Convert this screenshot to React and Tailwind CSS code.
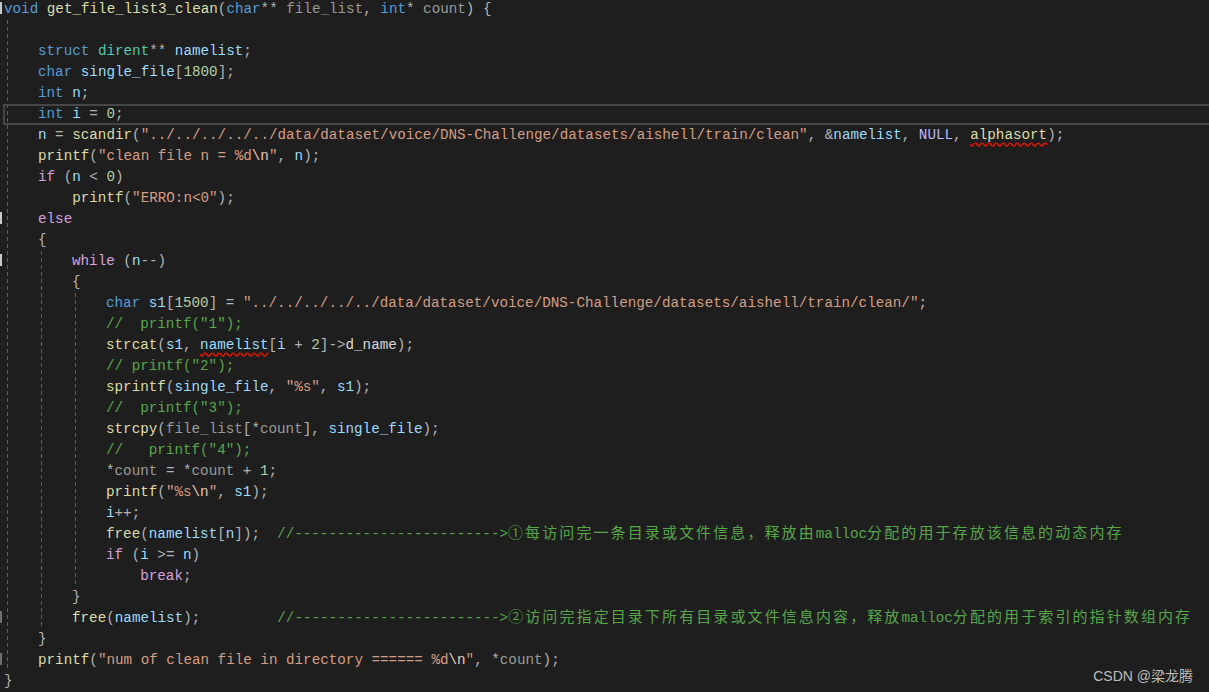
import React from 'react';

// colores del tema oscuro de Visual Studio
const C = {
  k: 'text-[#569cd6]',
  c: 'text-[#d8a0df]',
  f: 'text-[#dcdcaa]',
  v: 'text-[#9cdcfe]',
  p: 'text-[#9a9a9a]',
  s: 'text-[#d69d85]',
  e: 'text-[#e8c9bb]',
  m: 'text-[#57a64a]',
  n: 'text-[#b5cea8]',
  t: 'text-[#4ec9b0]',
  o: 'text-[#b4b4b4]',
  u: 'text-[#beb7ff]',
  d: 'text-[#dadada]',
  w: 'text-[#dcdcaa] underline decoration-wavy decoration-[#e51400] underline-offset-[3px]',
  x: 'text-[#9cdcfe] underline decoration-wavy decoration-[#e51400] underline-offset-[3px]',
  j: "text-[#57a64a] text-[15px] leading-none tracking-[2.1px] font-['Noto_Sans_CJK_SC',sans-serif]",
};

const guide =
  'ml-[3px] pl-[31px] bg-[linear-gradient(to_bottom,#5e5e5e_4px,transparent_4px)] bg-[length:1px_7px] bg-repeat-y bg-left-top';

const ARROW = '//' + '-'.repeat(24) + '>';

function Line({ t = [], hl = false }) {
  return (
    <div
      className={`whitespace-pre ${
        hl
          ? '-ml-[35px] pl-[33px] h-[21px] leading-[17px] border-2 border-r-0 border-[#464646]'
          : 'h-[21px] leading-[21px]'
      }`}
    >
      {t.map((tok, i) =>
        typeof tok === 'string' ? (
          <span key={i} className={C.o}>{tok}</span>
        ) : (
          <span key={i} className={C[tok[0]]}>{tok[1]}</span>
        )
      )}
    </div>
  );
}

function Mark({ top, tone }) {
  return <div className={`absolute left-0 w-[2px] h-[12px] ${tone}`} style={{ top }} />;
}

export default function App() {
  return (
    <div className="relative h-[692px] w-full overflow-hidden bg-[#1e1e1e] flex flex-col font-['Liberation_Mono',monospace] text-[14.25px]">
      <div className="-mt-[1px] pl-[4px]">
        <Line t={[['k', 'void'], ' ', ['f', 'get_file_list3_clean'], '(', ['k', 'char'], '** ', ['p', 'file_list'], ', ', ['k', 'int'], '* ', ['p', 'count'], ') {']} />

        <div className={guide}>
          <Line />
          <Line t={[['k', 'struct'], ' ', ['t', 'dirent'], '** ', ['v', 'namelist'], ';']} />
          <Line t={[['k', 'char'], ' ', ['v', 'single_file'], '[', ['n', '1800'], '];']} />
          <Line t={[['k', 'int'], ' ', ['v', 'n'], ';']} />
          <Line hl t={[['k', 'int'], ' ', ['v', 'i'], ' = ', ['n', '0'], ';']} />
          <Line t={[['v', 'n'], ' = ', ['f', 'scandir'], '(', ['s', '"../../../../../data/dataset/voice/DNS-Challenge/datasets/aishell/train/clean"'], ', &', ['v', 'namelist'], ', ', ['u', 'NULL'], ', ', ['w', 'alphasort'], ');']} />
          <Line t={[['f', 'printf'], '(', ['s', '"clean file n = %d'], ['e', '\\n'], ['s', '"'], ', ', ['v', 'n'], ');']} />
          <Line t={[['c', 'if'], ' (', ['v', 'n'], ' < ', ['n', '0'], ')']} />
          <Line t={['    ', ['f', 'printf'], '(', ['s', '"ERRO:n<0"'], ');']} />
          <Line t={[['c', 'else']]} />
          <Line t={['{']} />

          <div className={guide}>
            <Line t={[['c', 'while'], ' (', ['v', 'n'], '--)']} />
            <Line t={['{']} />

            <div className={guide}>
              <Line t={[['k', 'char'], ' ', ['v', 's1'], '[', ['n', '1500'], '] = ', ['s', '"../../../../../data/dataset/voice/DNS-Challenge/datasets/aishell/train/clean/"'], ';']} />
              <Line t={[['m', '//  printf("1");']]} />
              <Line t={[['f', 'strcat'], '(', ['v', 's1'], ', ', ['x', 'namelist'], '[', ['v', 'i'], ' + ', ['n', '2'], ']->', ['d', 'd_name'], ');']} />
              <Line t={[['m', '// printf("2");']]} />
              <Line t={[['f', 'sprintf'], '(', ['v', 'single_file'], ', ', ['s', '"%s"'], ', ', ['v', 's1'], ');']} />
              <Line t={[['m', '//  printf("3");']]} />
              <Line t={[['f', 'strcpy'], '(', ['p', 'file_list'], '[*', ['p', 'count'], '], ', ['v', 'single_file'], ');']} />
              <Line t={[['m', '//   printf("4");']]} />
              <Line t={['*', ['p', 'count'], ' = *', ['p', 'count'], ' + ', ['n', '1'], ';']} />
              <Line t={[['f', 'printf'], '(', ['s', '"%s'], ['e', '\\n'], ['s', '"'], ', ', ['v', 's1'], ');']} />
              <Line t={[['v', 'i'], '++;']} />
              <Line t={[['f', 'free'], '(', ['v', 'namelist'], '[', ['v', 'n'], ']);  ', ['m', ARROW], ['j', '①每访问完一条目录或文件信息，释放由'], ['m', 'malloc'], ['j', '分配的用于存放该信息的动态内存']]} />
              <Line t={[['c', 'if'], ' (', ['v', 'i'], ' >= ', ['v', 'n'], ')']} />
              <Line t={['    ', ['c', 'break'], ';']} />
            </div>

            <Line t={['}']} />
            <Line t={[['f', 'free'], '(', ['v', 'namelist'], ');         ', ['m', ARROW], ['j', '②访问完指定目录下所有目录或文件信息内容，释放'], ['m', 'malloc'], ['j', '分配的用于索引的指针数组内存']]} />
          </div>

          <Line t={['}']} />
          <Line t={[['f', 'printf'], '(', ['s', '"num of clean file in directory ====== %d'], ['e', '\\n'], ['s', '"'], ', *', ['p', 'count'], ');']} />
        </div>

        <Line t={['}']} />
      </div>

      {/* marcas del margen izquierdo */}
      <Mark top={2} tone="bg-[#c8c8c8]" />
      <Mark top={212} tone="bg-[#c8c8c8]" />
      <Mark top={254} tone="bg-[#c8c8c8]" />
      <Mark top={611} tone="bg-[#6e6e6e]" />
      <Mark top={653} tone="bg-[#6e6e6e]" />

      <div className="absolute right-[16px] bottom-[9px] text-[14px] leading-none text-[#bdbdbd] font-['Liberation_Sans','Noto_Sans_CJK_SC',sans-serif]">
        CSDN @梁龙腾
      </div>
    </div>
  );
}
